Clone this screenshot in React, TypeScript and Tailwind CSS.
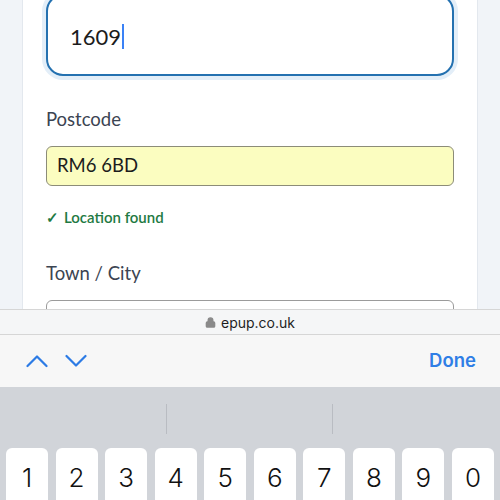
import { Lock } from 'lucide-react';

const keys = ['1', '2', '3', '4', '5', '6', '7', '8', '9', '0'];

function Chevron({ up }: { up?: boolean }) {
  return (
    <svg width="22" height="14" viewBox="0 0 22 14" fill="none">
      <path
        d={up ? 'M1.5 12L11 2.5L20.5 12' : 'M1.5 2L11 11.5L20.5 2'}
        stroke="#2c7be5"
        strokeWidth="2.2"
        strokeLinecap="round"
        strokeLinejoin="round"
      />
    </svg>
  );
}

export default function App() {
  return (
    <div className="relative h-[500px] w-[500px] overflow-hidden bg-[#d1d4d9]" style={{ fontFamily: 'Inter, sans-serif' }}>
      {/* page behind the keyboard */}
      <div className="flex h-[309px] overflow-hidden bg-[#f1f4f8]">
        <div className="w-[22px] shrink-0" />
        <div
          className="flex-1 border-x border-[#e3e8ee] bg-white px-[23px]"
          style={{ fontFamily: 'Lato, "Open Sans", sans-serif' }}
        >
          <div className="-mt-[6px] flex h-[82px] items-center rounded-[17px] border-[2.5px] border-[#2471b0] bg-white pl-[22px] pt-[2px] shadow-[0_0_0_4px_#e3eef8]">
            <span className="text-[22px] text-[#1c1c1c]">1609</span>
            <span className="ml-[1px] h-[25px] w-[2px] bg-[#3b82f6]" />
          </div>

          <div className="mt-[30px] text-[18.5px] text-[#3b4452]">Postcode</div>
          <div className="mt-[12px] flex h-[40px] items-center rounded-[6px] border border-[#8c8c78] bg-[#fbfdc0] px-[10px] text-[18.5px] text-[#1c1c1c]">
            RM6 6BD
          </div>
          <div className="mt-[20px] flex items-center gap-[5px] text-[15px] font-semibold text-[#1f7a43]">
            <span>✓</span>
            <span>Location found</span>
          </div>

          <div className="mt-[32px] text-[18.5px] text-[#3b4452]">Town / City</div>
          <div className="mt-[12px] h-[40px] rounded-[6px] border border-[#9b9b9b] bg-white" />
        </div>
        <div className="w-[22px] shrink-0" />
      </div>

      {/* safari address bar */}
      <div className="flex h-[26px] items-center justify-center gap-[5px] border-y border-[#d6d6d6] bg-[#f5f6f7]">
        <Lock size={11} strokeWidth={3} className="text-[#8a8a8a]" fill="#8a8a8a" />
        <span className="text-[14px] text-[#1e1e1e]">epup.co.uk</span>
      </div>

      {/* form toolbar */}
      <div className="flex h-[52px] items-center bg-[#f7f7f7] pl-[26px] pr-[24px]">
        <Chevron up />
        <div className="ml-[17px]">
          <Chevron />
        </div>
        <span className="ml-auto text-[18.5px] font-semibold text-[#2f7ee6]">Done</span>
      </div>

      {/* keyboard */}
      <div className="bg-[#d1d4d9]">
        <div className="grid h-[61px] grid-cols-3 items-center pt-[2px]">
          <div className="h-[30px] border-r border-[#b9bcc2]" />
          <div className="h-[30px] border-r border-[#b9bcc2]" />
          <div />
        </div>
        <div className="grid grid-cols-10 gap-[7.5px] px-[6px]">
          {keys.map((k) => (
            <div
              key={k}
              className="flex h-[60px] items-start justify-center rounded-[6px] bg-white pt-[10px] text-[26px] font-light text-[#111]"
            >
              {k}
            </div>
          ))}
        </div>
      </div>
    </div>
  );
}
